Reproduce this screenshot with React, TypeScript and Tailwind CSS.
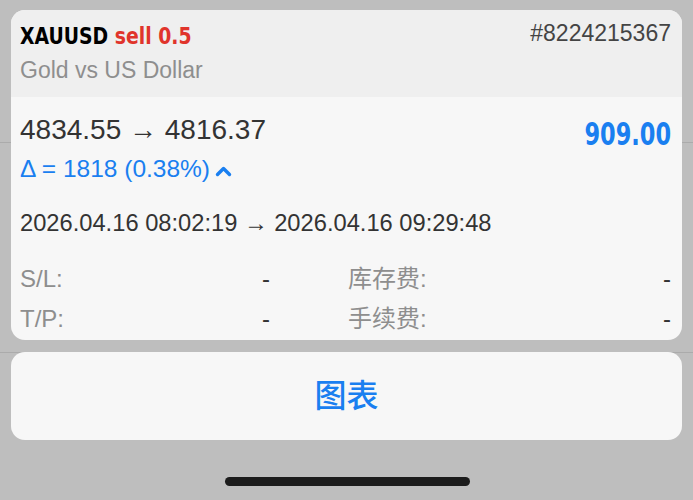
const sans = "font-['Liberation_Sans','Noto_Sans_CJK_SC',sans-serif]";
const narrow = "font-['DejaVu_Sans_Condensed','Liberation_Sans',sans-serif]";

function FeeRow({ left, right }: { left: string; right: string }) {
  return (
    <div className="flex h-[40px] items-center text-[24px] leading-none">
      <div className="flex w-[250px] justify-between">
        <span className="text-[#8e8e8e]">{left}</span>
        <span className="text-[#333]">-</span>
      </div>
      <div className="ml-[78px] flex flex-1 justify-between">
        <span className="text-[#8e8e8e]">{right}</span>
        <span className="text-[#333]">-</span>
      </div>
    </div>
  );
}

export default function App() {
  return (
    <div className={`relative h-[500px] w-[693px] overflow-hidden bg-[#bebebe] ${sans}`}>
      {/* separators of the sheet behind the dim */}
      <div className="absolute left-0 right-0 top-[142px] h-px bg-[#ababab]" />
      <div className="absolute left-0 right-0 top-[352px] h-px bg-[#ababab]" />

      <div className="relative flex flex-col gap-[12px] px-[11px] pt-[10px]">
        <div className="overflow-hidden rounded-[14px] bg-[#f7f7f7]">
          <div className="flex h-[87px] items-start justify-between bg-[#efefef] pl-[9px] pr-[11px] pt-[12px]">
            <div className="flex flex-col pt-[3px]">
              <div className={`h-[23px] text-[23px] font-bold leading-none ${narrow}`}>
                <span className="inline-block origin-left scale-x-[0.91] whitespace-nowrap">
                  <span className="text-black">XAUUSD</span>{" "}
                  <span className="text-[#e0342b]">sell 0.5</span>
                </span>
              </div>
              <div className="mt-[11px] text-[23px] leading-none text-[#8e8e8e]">Gold vs US Dollar</div>
            </div>
            <div className="text-[23px] leading-none text-[#444]">#8224215367</div>
          </div>

          <div className="pl-[9px] pr-[11px] pt-[19px]">
            <div className="flex h-[28px] items-start justify-between">
              <div className="text-[28px] leading-none text-[#333]">4834.55 → 4816.37</div>
              <div
                className={`mt-[2px] origin-right scale-x-[0.78] text-[32px] font-bold leading-none text-[#1a7ff0] ${narrow}`}
              >
                909.00
              </div>
            </div>
            <div className="mt-[13px] flex h-[25px] items-center text-[24.5px] leading-none text-[#1a7ff0]">
              <span>Δ = 1818 (0.38%)</span>
              <svg className="ml-[5px] mt-[3px]" width="17" height="11" viewBox="0 0 17 11" fill="none">
                <polyline
                  points="2.5,8.5 8.5,2.5 14.5,8.5"
                  stroke="currentColor"
                  strokeWidth="3.4"
                  strokeLinecap="round"
                  strokeLinejoin="round"
                />
              </svg>
            </div>
            <div className="mt-[30px] text-[23.7px] leading-none text-[#333]">
              2026.04.16 08:02:19 → 2026.04.16 09:29:48
            </div>
            <div className="mt-[23px] pb-[1px]">
              <FeeRow left="S/L:" right="库存费:" />
              <FeeRow left="T/P:" right="手续费:" />
            </div>
          </div>
        </div>

        <button className="flex h-[88px] items-center justify-center rounded-[14px] bg-[#f7f7f7] text-[32px] font-medium text-[#1a7ff0]">
          图表
        </button>
      </div>

      <div className="absolute bottom-[14px] left-[225px] h-[9px] w-[245px] rounded-full bg-[#1c1c1c]" />
    </div>
  );
}
